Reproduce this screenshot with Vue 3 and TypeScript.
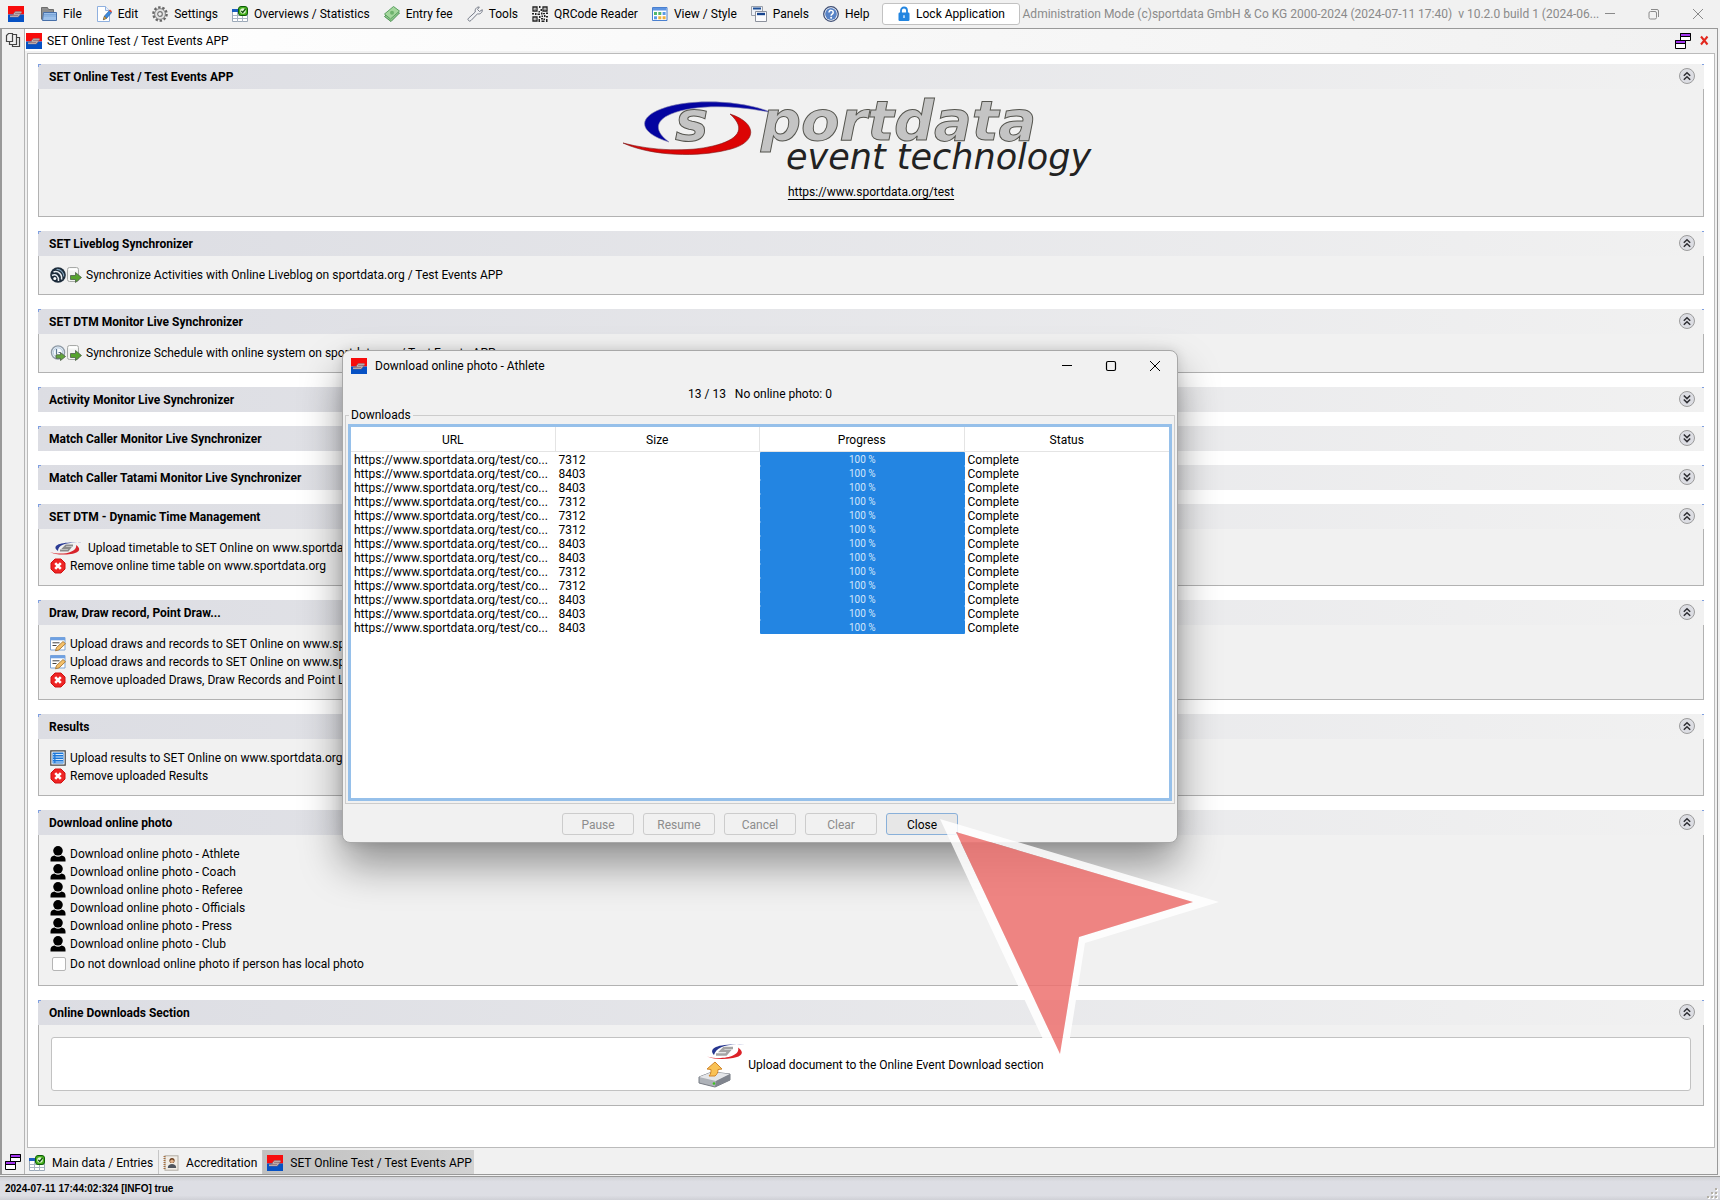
<script setup lang="ts">
import { ref } from 'vue'

interface MenuEntry { icon: string; label: string }
interface Row { icons: string[]; text: string }
interface Section { title: string; open: boolean; kind: 'logo' | 'rows' | 'upload'; rows: Row[]; option?: string }
interface Download { size: number; progress: number; status: string }

const icons: Record<string, string> = {
  app: '<rect width="16" height="8.5" fill="#f80c0c"/><rect y="8.5" width="16" height="7.500" fill="#0651c4"/><path d="M13.500 6.300H7.500L6 8.300H11.500L10 10.300H2" fill="none" stroke="#8f6f76" stroke-width="1.900"/><path d="M13.500 6.300H7.500L6 8.300H11.500L10 10.300H2" fill="none" stroke="#c4b8b8" stroke-width="1"/>',
  folder: '<path d="M.5 13.500V1.500h6l1 2h5v3" fill="#8e8e8e" stroke="#6d6d6d"/><path d="M2.500 6.500h13v8h-14z" fill="#9cc0ea" stroke="#476fa8"/><path d="M3 8.500h12M3 10h12" stroke="#7ba6da"/>',
  edit: '<path d="M1.500.5h8l4 4v11h-12z" fill="#fff" stroke="#8fb0df"/><path d="M9.500.5v4h4" fill="#e5edfa" stroke="#8fb0df"/><path d="M7.500 13.500l1-3.500 5-5.500 2.200 2-5 5.700z" fill="#3d8ce0" stroke="#2b5c9d" stroke-width=".7"/><path d="M13 4.500l1-1 2 1.800-1 1.200z" fill="#e6462c"/><path d="M7.300 13.800l1.100-3.500 2.200 2z" fill="#f0b64b" stroke="#6b4712" stroke-width=".5"/>',
  gear: '<circle cx="8" cy="8" r="6.600" fill="none" stroke="#666" stroke-width="2.400" stroke-dasharray="2.400 1.750"/><circle cx="8" cy="8" r="5.400" fill="#e2e2e2" stroke="#777" stroke-width=".9"/><circle cx="8" cy="8" r="2.300" fill="#f1f1f1" stroke="#777" stroke-width="1.200"/>',
  overview: '<path d="M.5 3.500h15v12H.5z" fill="#fff" stroke="#9ca9b8"/><path d="M0 3h8v3H0z" fill="#1c5fc0"/><path d="M1 9.500h14M1 12.500h14M5.500 6v10M10.500 6v10" stroke="#a9b4c3"/><rect x="6.500" y=".5" width="9" height="9" rx="2.500" fill="#47b11d" stroke="#0c5c08"/><circle cx="11" cy="5" r="2.800" fill="#dff5d2"/><path d="M9.300 4.800l1.400 1.700 2.800-3.500" fill="none" stroke="#0d4f0a" stroke-width="1.300"/>',
  money: '<path d="M.5 10.500l9-9 6 5.500-8.500 8.500z" fill="#8dc98a" stroke="#4c8f52"/><path d="M.5 8l9-7.500 6 4.500-9 8z" fill="#a4d79d" stroke="#5ba061"/><circle cx="8" cy="6.800" r="2" fill="#6eb36d"/>',
  wrench: '<path d="M1.500 14.500a1.600 1.600 0 0 1 0-2.300L8.300 6C7.500 3.500 9.500.8 12.300 1L10.500 3.500l2 2L15.300 3.700C15.700 6.500 13 8.600 10.500 7.800L4 14.500a1.700 1.700 0 0 1-2.500 0z" fill="#f0f1f4" stroke="#777c88"/>',
  qr: '<path d="M1 1h4v4H1zM11 1h4v4h-4zM1 11h4v4H1z" fill="#fff" stroke="#222" stroke-width="1.300"/><path d="M2.500 2.500h1.200v1.200H2.500zM12.400 2.500h1.200v1.200h-1.200zM2.500 12.400h1.200v1.200H2.500zM7 0h1.500v2H7zM8.500 3H10v2H8.500zM6.500 5H8v1.500H6.500zM0 7h2v1.500H0zM3 7h1.500v2H3zM5.500 7.500H8V9H5.500zM9 6.500h1.500v2H9zM11 7h2v1.300h-2zM14 6.500h2V8h-2zM7 10h1.500v2H7zM9.500 9.500H11V11H9.500zM12 9h1.500v2H12zM14 10h2v1.500h-2zM6.500 13H8v3H6.500zM9 12h2v1.500H9zM11.500 12.500h1.500V14h-1.500zM14 13h1.500v3H14zM9.500 14.500h3V16h-3z" fill="#222"/>',
  view: '<path d="M.5 1.500h14.500v13H.5z" fill="#fff" stroke="#4a80cf"/><path d="M1 2h13.500v2.500H1z" fill="#5d94e2"/><path d="M2 6h3v3H2zM6.300 6h3v3h-3z" fill="#52b86c"/><path d="M10.600 6h3v3h-3z" fill="#5a9ae6"/><path d="M2 10.300h3v3H2z" fill="#5a9ae6"/><path d="M6.300 10.300h3v3h-3zM10.600 10.300h3v3h-3z" fill="#eeb03c"/>',
  panels: '<path d="M.5.5h11v9H.5z" fill="#eef1f7" stroke="#9aa0ab"/><path d="M2 1.500h8v2H2z" fill="#1e5098"/><path d="M4.500 5.500h11v10h-11z" fill="#fbfbfd" stroke="#8c919c"/><path d="M6 6.800h8v2.400H6z" fill="#17458f"/>',
  help: '<circle cx="8" cy="8" r="7.300" fill="#fff" stroke="#3d4d74" stroke-width="1.300"/><circle cx="8" cy="8" r="5.900" fill="#5883c6"/><path d="M6 6.400c0-2.800 4.200-2.600 4.200 0 0 1.600-2.100 1.700-2.100 3.300" fill="none" stroke="#fff" stroke-width="1.500"/><circle cx="8.100" cy="11.700" r="1" fill="#fff"/>',
  lock: '<path d="M5 7V4.500a3 3 0 0 1 6 0V7" fill="none" stroke="#2285e0" stroke-width="1.800"/><rect x="2.500" y="6.500" width="11" height="8.500" rx="1.200" fill="#2285e0"/><path d="M8 9.300v2.800" stroke="#d8eafb" stroke-width="1.500"/>',
  pages: '<g fill="#f1f1f1" stroke="#444" stroke-width="1.200"><path d="M7.500 5.500h7v9h-7z"/><path d="M4.500 2.500h7v10h-7z"/><path d="M3.500 1.500h4v8h-6v-6z"/></g>',
  windows: '<g stroke="#000"><path d="M5.500.5h10v7h-10z" fill="#fff"/><path d="M5.500.5h10v3h-10z" fill="#a336f0"/><path d="M.5 7.500h10v8H.5z" fill="#fff"/><path d="M.5 7.500h10v3H.5z" fill="#a336f0"/></g>',
  redx: '<path d="M5 3.500l6.500 8M11.500 3.500l-6.500 8" stroke="#e2281e" stroke-width="2"/>',
  blog: '<circle cx="8" cy="8" r="7.800" fill="#1c2b3a"/><path d="M2 8.500c4-2 7 1 6.500 5.500M3.500 5C8 3.500 12.500 7 11.500 12.500" fill="none" stroke="#e9eef2" stroke-width="1.500"/><path d="M6.500 2.500c4-.5 7.500 3 7.200 7" fill="none" stroke="#7fa0b8" stroke-width="1.200"/><circle cx="4.800" cy="11.500" r="1.500" fill="#fff"/>',
  docgo: '<rect x="1.500" y=".5" width="11" height="14" rx="2" fill="#f2f4f2" stroke="#a8aaa8"/><path d="M3 2.500h8" stroke="#fff" stroke-width="2"/><path d="M4.500 8.500h5V5.500l6 5-6 5V12.500h-5z" fill="#55a32d" stroke="#4b5e48" stroke-width=".8"/>',
  clockgo: '<circle cx="8" cy="7.500" r="6.600" fill="#e3edf7" stroke="#8e9aa6" stroke-width="1.300"/><circle cx="8" cy="7.500" r="4.600" fill="#f7fbff" stroke="#a9bfd4" stroke-width=".8"/><path d="M6.500 4v5M8.500 7.500h2" stroke="#5d7690" stroke-width="1.200"/><path d="M6 9.800h4.500V7.500l5 4-5 4V13.300H6z" fill="#62a63c" stroke="#4c5c4a" stroke-width=".8"/>',
  remove: '<path d="M5 1h6l4 4v6l-4 4H5l-4-4V5z" fill="#ee2525" stroke="#d01212" stroke-linejoin="round"/><path d="M5.200 5.200l5.600 5.600M10.800 5.200l-5.600 5.600" stroke="#fff" stroke-width="2.600"/>',
  form: '<path d="M.5 1.500h14.500v12.500H.5z" fill="#fff" stroke="#7fa5d6"/><path d="M.5 1.500h14.500v2.800H.5z" fill="#6ea0e2"/><path d="M2.500 6.800h7M2.500 9.500h4" stroke="#444"/><path d="M5.500 14.800l1-3.300 6.500-6 2.500 2.200-6.500 6.200z" fill="#f5c069" stroke="#9a6b28" stroke-width=".8"/>',
  list: '<path d="M.8.8h14.400v14.400H.8z" fill="#fff" stroke="#444" stroke-width="1.200"/><path d="M2.500 2.500h11v11h-11z" fill="#1b76d8"/><path d="M5.500 4.500h7.500M5.500 7h7.500M5.500 9.500h7.500M5.500 12h7.500M3.200 4.500h1M3.200 7h1M3.200 9.500h1M3.200 12h1" stroke="#d7eafc"/>',
  person: '<circle cx="8" cy="4.800" r="4.800" fill="#000"/><path d="M.5 15.500v-2c0-2.500 1.500-3.500 4-4 2 1.700 5 1.700 7 0 2.500.5 4 1.500 4 4v2z" fill="#000"/>',
  badge: '<rect x="2" y=".8" width="13" height="14.400" fill="#f1ede6" stroke="#b1aca4"/><path d="M1.500 1v14" stroke="#a87040" stroke-width="2" stroke-dasharray="1 1"/><circle cx="9" cy="5.500" r="2.600" fill="#6a3c1c"/><circle cx="9" cy="6.300" r="1.800" fill="#e4b48c"/><path d="M4.800 13c0-3 2-4 4.200-4s4.200 1 4.200 4z" fill="#50555e"/>',
  up: '<circle cx="8" cy="8" r="7.500" fill="#dcdde3" stroke="#9c9c9c"/><path d="M4.800 7.800L8 4.700l3.200 3.100M4.800 11.800L8 8.700l3.200 3.100" fill="none" stroke="#2e2e33" stroke-width="1.500"/>',
  down: '<circle cx="8" cy="8" r="7.500" fill="#dcdde3" stroke="#9c9c9c"/><path d="M4.800 4.500L8 7.600l3.200-3.100M4.800 8.500L8 11.600l3.200-3.100" fill="none" stroke="#2e2e33" stroke-width="1.500"/>',
  minimize: '<path d="M3 7.500h10" stroke="currentColor"/>',
  restore: '<rect x="3" y="5.500" width="7.500" height="7.500" rx="1.500" fill="none" stroke="currentColor"/><path d="M5 3.500h6a1.500 1.500 0 0 1 1.500 1.500v6" fill="none" stroke="currentColor"/>',
  maximize: '<rect x="3.500" y="3.500" width="9" height="9" rx="1.500" fill="none" stroke="currentColor" stroke-width="1.200"/>',
  close: '<path d="M3 3l10 10M13 3L3 13" stroke="currentColor"/>',
}

const menu: MenuEntry[] = [
  { icon: 'folder', label: 'File' },
  { icon: 'edit', label: 'Edit' },
  { icon: 'gear', label: 'Settings' },
  { icon: 'overview', label: 'Overviews / Statistics' },
  { icon: 'money', label: 'Entry fee' },
  { icon: 'wrench', label: 'Tools' },
  { icon: 'qr', label: 'QRCode Reader' },
  { icon: 'view', label: 'View / Style' },
  { icon: 'panels', label: 'Panels' },
  { icon: 'help', label: 'Help' },
]

const roles = ['Athlete', 'Coach', 'Referee', 'Officials', 'Press', 'Club']

const sections = ref<Section[]>([
  { title: 'SET Online Test / Test Events APP', open: true, kind: 'logo', rows: [] },
  { title: 'SET Liveblog Synchronizer', open: true, kind: 'rows', rows: [
    { icons: ['blog', 'docgo'], text: 'Synchronize Activities with Online Liveblog on sportdata.org / Test Events APP' },
  ] },
  { title: 'SET DTM Monitor Live Synchronizer', open: true, kind: 'rows', rows: [
    { icons: ['clockgo', 'docgo'], text: 'Synchronize Schedule with online system on sportdata.org / Test Events APP' },
  ] },
  { title: 'Activity Monitor Live Synchronizer', open: false, kind: 'rows', rows: [] },
  { title: 'Match Caller Monitor Live Synchronizer', open: false, kind: 'rows', rows: [] },
  { title: 'Match Caller Tatami Monitor Live Synchronizer', open: false, kind: 'rows', rows: [] },
  { title: 'SET DTM - Dynamic Time Management', open: true, kind: 'rows', rows: [
    { icons: ['swoosh'], text: 'Upload timetable to SET Online on www.sportdata.org' },
    { icons: ['remove'], text: 'Remove online time table on www.sportdata.org' },
  ] },
  { title: 'Draw, Draw record, Point Draw...', open: true, kind: 'rows', rows: [
    { icons: ['form'], text: 'Upload draws and records to SET Online on www.sportdata.org' },
    { icons: ['form'], text: 'Upload draws and records to SET Online on www.sportdata.org' },
    { icons: ['remove'], text: 'Remove uploaded Draws, Draw Records and Point Lists' },
  ] },
  { title: 'Results', open: true, kind: 'rows', rows: [
    { icons: ['list'], text: 'Upload results to SET Online on www.sportdata.org / Test Events APP' },
    { icons: ['remove'], text: 'Remove uploaded Results' },
  ] },
  { title: 'Download online photo', open: true, kind: 'rows',
    rows: roles.map((r) => ({ icons: ['person'], text: `Download online photo - ${r}` })),
    option: 'Do not download online photo if person has local photo' },
  { title: 'Online Downloads Section', open: true, kind: 'upload', rows: [] },
])

const columns = ['URL', 'Size', 'Progress', 'Status']
const downloads: Download[] = [7312, 8403, 8403, 7312, 7312, 7312, 8403, 8403, 7312, 7312, 8403, 8403, 8403]
  .map((size) => ({ size, progress: 100, status: 'Complete' }))

const actions = [
  { label: 'Pause', enabled: false },
  { label: 'Resume', enabled: false },
  { label: 'Cancel', enabled: false },
  { label: 'Clear', enabled: false },
  { label: 'Close', enabled: true },
]
const skipLocal = ref(false)
</script>

<template>
  <div class="window">
    <header class="menubar">
      <svg class="icon" viewBox="0 0 16 16" v-html="icons.app" />
      <nav class="menu">
        <button v-for="m in menu" :key="m.label" type="button" class="menu-item">
          <svg class="icon" viewBox="0 0 16 16" v-html="icons[m.icon]" />{{ m.label }}
        </button>
      </nav>
      <button type="button" class="lock">
        <svg class="icon" viewBox="0 0 16 16" v-html="icons.lock" />Lock Application
      </button>
      <span class="mode">Administration Mode (c)sportdata GmbH &amp; Co KG 2000-2024 (2024-07-11 17:40)&nbsp; v 10.2.0 build 1 (2024-06...</span>
      <div class="win-controls muted">
        <button v-for="c in ['minimize', 'restore', 'close']" :key="c" type="button" :aria-label="c">
          <svg class="icon" viewBox="0 0 16 16" v-html="icons[c]" />
        </button>
      </div>
    </header>

    <div class="workspace">
      <aside class="rail">
        <svg class="icon" viewBox="0 0 16 16" v-html="icons.pages" />
        <svg class="icon" viewBox="0 0 16 16" v-html="icons.windows" />
      </aside>
      <div class="frame">
        <div class="frame-title">
          <svg class="icon" viewBox="0 0 16 16" v-html="icons.app" />
          <span class="grow">SET Online Test / Test Events APP</span>
          <button type="button" aria-label="Float"><svg class="icon" viewBox="0 0 16 16" v-html="icons.windows" /></button>
          <button type="button" aria-label="Close"><svg class="icon" viewBox="0 0 16 16" v-html="icons.redx" /></button>
        </div>

        <main class="content">
          <section v-for="s in sections" :key="s.title" class="section">
            <div class="section-head">
              <h2>{{ s.title }}</h2>
              <button type="button" :aria-label="s.open ? 'Collapse' : 'Expand'" @click="s.open = !s.open">
                <svg class="icon" viewBox="0 0 16 16" v-html="s.open ? icons.up : icons.down" />
              </button>
            </div>

            <div v-if="s.open && s.kind === 'logo'" class="section-body brand">
              <svg class="brand-logo" viewBox="0 0 496 78" role="img" aria-label="sportdata event technology">
                <path d="M46 41C16 32 14 17 38 8c28-11 82-9 112 4C114 4 72 3 48 13c-17 7-16 18-2 28z" fill="#0404a0" stroke="#8a8ab0" stroke-width=".6" />
                <path d="M0 42c30 8 66 9 90 3 25-6 34-17 17-32 28 9 27 28 1 35-33 9-80 7-108-6z" fill="#dc0404" stroke="#7c1818" stroke-width=".6" />
                <text class="mark" x="52" y="39">s</text>
                <text class="mark" x="138" y="39">portdata</text>
                <text class="tagline" x="163" y="68">event technology</text>
              </svg>
              <a href="https://www.sportdata.org/test">https://www.sportdata.org/test</a>
            </div>

            <div v-else-if="s.open && s.kind === 'rows'" class="section-body list">
              <button v-for="(r, i) in s.rows" :key="i" type="button" class="row">
                <span class="row-icons">
                  <template v-for="n in r.icons" :key="n">
                    <svg v-if="n === 'swoosh'" class="swoosh" viewBox="0 0 34 14">
                      <path d="M8 10C0 4 12 0 33 2 18 1 8 3 8 10z" fill="#2c3c94" />
                      <path d="M0 11c12 4 28 0 26-7 6 4 3 8-5 9-8 1-15 1-21-2z" fill="#d8242b" />
                      <path d="M23 4.500h-7L13.500 7H20L18 9.500H10" fill="none" stroke="#8b8b8b" stroke-width="1.800" />
                    </svg>
                    <svg v-else class="icon" viewBox="0 0 16 16" v-html="icons[n]" />
                  </template>
                </span>{{ r.text }}
              </button>
              <label v-if="s.option" class="option">
                <input v-model="skipLocal" type="checkbox">{{ s.option }}
              </label>
            </div>

            <div v-else-if="s.open" class="section-body upload">
              <button type="button">
                <svg class="upload-icon" viewBox="0 0 48 46">
                  <path d="M16 13C10 7 18 1 47 3 30 1 18 5 16 13z" fill="#26368f" />
                  <path d="M9 14.500c14 4 34 0 31-9 7 5 4 9-5 10.500-9 1.500-18 1.500-26-1.500z" fill="#dc2228" />
                  <path d="M35 6h-9l-3 3h8l-3 3.500H18" fill="none" stroke="#a4a4a4" stroke-width="2.500" />
                  <path d="M1 35l13-5 18 2v6L17 45 1 41z" fill="#aeb2b8" stroke="#777c84" />
                  <path d="M1 35l13-5 18 2-14 7z" fill="#e4e6e9" />
                  <path d="M18 39l14-7v6l-15 7z" fill="#80858e" />
                  <circle cx="16" cy="41.500" r="1.300" fill="#3ac21f" />
                  <path d="M17 20l7 7-4 .5c0 3-1 5-3 6.500h-6c2-2 2-4 2-6.500l-4-.5z" fill="#f9c255" stroke="#d0852a" />
                </svg>
                Upload document to the Online Event Download section
              </button>
            </div>
          </section>
        </main>

        <nav class="tabs">
          <button type="button"><svg class="icon" viewBox="0 0 16 16" v-html="icons.overview" />Main data / Entries</button>
          <button type="button"><svg class="icon" viewBox="0 0 16 16" v-html="icons.badge" />Accreditation</button>
          <button type="button" class="active"><svg class="icon" viewBox="0 0 16 16" v-html="icons.app" />SET Online Test / Test Events APP</button>
        </nav>
      </div>
    </div>

    <footer class="status">
      <span>2024-07-11 17:44:02:324 [INFO] true</span>
      <svg class="grip" viewBox="0 0 12 12"><path d="M8 0h2v2H8zM4 4h2v2H4zM8 4h2v2H8zM0 8h2v2H0zM4 8h2v2H4zM8 8h2v2H8z" fill="#fff" transform="translate(1 1)" /><path d="M8 0h2v2H8zM4 4h2v2H4zM8 4h2v2H8zM0 8h2v2H0zM4 8h2v2H4zM8 8h2v2H8z" fill="#b3b0a6" /></svg>
    </footer>

    <div class="dialog" role="dialog" aria-labelledby="dialog-title">
      <div class="dialog-title">
        <svg class="icon" viewBox="0 0 16 16" v-html="icons.app" />
        <span id="dialog-title" class="grow">Download online photo - Athlete</span>
        <div class="win-controls">
          <button v-for="c in ['minimize', 'maximize', 'close']" :key="c" type="button" :aria-label="c">
            <svg class="icon" viewBox="0 0 16 16" v-html="icons[c]" />
          </button>
        </div>
      </div>
      <p class="count">13 / 13&nbsp;&nbsp; No online photo: 0</p>
      <fieldset>
        <legend>Downloads</legend>
        <div class="table-box">
          <table>
            <thead>
              <tr><th v-for="c in columns" :key="c" scope="col">{{ c }}</th></tr>
            </thead>
            <tbody>
              <tr v-for="(d, i) in downloads" :key="i">
                <td>https://www.sportdata.org/test/co...</td>
                <td>{{ d.size }}</td>
                <td class="progress"><div :style="{ width: d.progress + '%' }">{{ d.progress }} %</div></td>
                <td>{{ d.status }}</td>
              </tr>
            </tbody>
          </table>
        </div>
      </fieldset>
      <div class="actions">
        <button v-for="a in actions" :key="a.label" type="button" :disabled="!a.enabled">{{ a.label }}</button>
      </div>
      <svg class="pointer" viewBox="0 0 280 264" aria-hidden="true">
        <path fill-rule="evenodd" d="M0 0L279 83 145 124 123 263ZM16 13L120 235 139 118 253 83Z" fill="#fff" fill-opacity=".85" />
        <path d="M16 13L120 235 139 118 253 83Z" fill="#ed7270" fill-opacity=".86" />
      </svg>
    </div>
  </div>
</template>

<style>
body { margin: 0; }
</style>

<style scoped>
* { box-sizing: border-box; }
.window {
  position: relative;
  display: flex;
  flex-direction: column;
  min-height: 100vh;
  overflow: hidden;
  background: #f1f1f1;
  color: #000;
  font: 12px/18px Roboto, "Open Sans", sans-serif;
}
button { padding: 0; border: 0; background: none; font: inherit; color: inherit; white-space: nowrap; }
.icon { display: block; flex: none; width: 16px; height: 16px; }
.grow { flex: 1; }

.menubar { display: flex; align-items: center; height: 28px; padding-left: 8px; }
.menu { display: flex; gap: 14px; margin-left: 17px; }
.menu-item { display: flex; align-items: center; gap: 6px; }
.lock {
  display: flex; align-items: center; justify-content: center; gap: 4px;
  width: 138px; height: 22px; margin-left: 12px;
  border: 1px solid #c2c2c2; border-radius: 3px; background: #fff;
}
.mode { flex: 1; min-width: 0; margin-left: 3px; color: #8a8a8a; white-space: nowrap; }
.win-controls { display: flex; gap: 28px; }
.muted { padding-right: 14px; color: #8a8a8a; }

.workspace {
  display: flex; flex: 1; margin-right: 2px;
  border: solid #999; border-width: 1px 1px 1px 2px;
}
.rail {
  display: flex; flex-direction: column; justify-content: space-between;
  width: 23px; padding: 3px 0 4px 3px; border-right: 1px solid #b5b5b5;
}
.frame { display: flex; flex: 1; flex-direction: column; min-width: 0; padding-right: 2px; }
.frame-title {
  display: flex; align-items: center; gap: 5px; height: 22px; padding: 1px 3px 0 1px;
  background: linear-gradient(90deg, #fff, #f1f1f1);
}
.content {
  display: flex; flex: 1; flex-direction: column; gap: 14px;
  margin: 2px 0 0 2px; padding: 10px; border: 1px solid #bbb; background: #fff;
}
.section-head {
  display: flex; align-items: center; justify-content: space-between; height: 25px; padding: 0 9px 0 11px;
  background:
    linear-gradient(#7f9fe0, #7f9fe0) 0 0 / 3px 1px no-repeat,
    linear-gradient(#7f9fe0, #7f9fe0) 0 0 / 1px 3px no-repeat,
    linear-gradient(#7f9fe0, #7f9fe0) 100% 0 / 2px 1px no-repeat,
    linear-gradient(90deg, #dcdde3, #f1f1f1);
}
.section-head button { padding-bottom: 1px; }
h2 { margin: 0; padding-top: 1px; font-size: 12px; line-height: 18px; font-weight: 700; }
.section-body { border: 1px solid #b2b2b2; border-top: 0; background: #f1f1f1; }
.brand { display: flex; flex-direction: column; align-items: center; gap: 4px; padding: 12px 0 15px; }
.brand-logo { width: 496px; height: 78px; overflow: visible; }
.brand a { color: #000; text-underline-offset: 3px; }
.mark { fill: #c4c4c4; stroke: #55554f; stroke-width: 1px; font: italic 700 56px "DejaVu Sans", sans-serif; }
.tagline { fill: #222; font: italic 35px "DejaVu Sans", sans-serif; }
.list { display: flex; flex-direction: column; align-items: flex-start; padding: 10px 11px; }
.row { display: flex; align-items: center; gap: 4px; height: 18px; }
.row-icons { display: flex; }
.swoosh { width: 34px; height: 14px; }
.option { display: flex; align-items: center; gap: 4px; height: 22px; padding-left: 2px; }
.option input { appearance: none; width: 14px; height: 14px; margin: 0; border: 1px solid #b5b5b5; border-radius: 2px; background: #fff; }
.upload { padding: 12px 12px 14px; }
.upload button {
  display: flex; align-items: center; justify-content: center; gap: 2px; width: 100%; height: 54px; padding-top: 2px;
  border: 1px solid #c2c2c2; border-radius: 3px; background: #fff;
}
.upload-icon { width: 48px; height: 46px; }

.tabs { display: flex; height: 26px; padding: 2px 0 0; }
.tabs button { display: flex; align-items: center; gap: 7px; padding: 1px 5px 0 4px; border-right: 1px solid #c6c6c6; }
.tabs .active { padding-right: 2px; border: 0; background: linear-gradient(90deg, #c0c0c0, #d2d2d2); }

.status {
  display: flex; align-items: flex-end; justify-content: space-between; height: 24px; margin-top: 1px; padding: 0 1px 0 5px;
  border-top: 1px solid #999; background: linear-gradient(#cfd0d4, #dddee4 20%, #dddee4 80%, #cfd0d6);
  font: 700 10px/22px "Liberation Sans", sans-serif;
}
.grip { width: 12px; height: 12px; }

.dialog {
  position: absolute; top: 350px; left: calc(50% - 518px); width: 836px;
  padding: 0 2px 7px; border: 1px solid #a8a8a8; border-radius: 8px; background: #f1f1f1;
  box-shadow: 0 22px 42px rgba(0, 0, 0, .4), 0 0 12px rgba(0, 0, 0, .12);
}
.dialog-title { display: flex; align-items: center; gap: 8px; height: 30px; padding: 0 12px 0 6px; }
.count { margin: 4px 0 3px; text-align: center; }
fieldset { min-width: 0; margin: 0; padding: 0 2px 2px; border: 1px solid #ccc; }
legend { margin-left: 1px; padding: 0 2px; }
.table-box { height: 377px; border: 3px solid #96c0ea; background: #fff; }
table { width: 100%; border-collapse: separate; border-spacing: 0; table-layout: fixed; }
th { height: 25px; padding: 2px 0 0; border-right: 1px solid #e4e4e4; border-bottom: 1px solid #e4e4e4; font-weight: 400; }
th:last-child { border-right: 0; }
td { height: 14px; padding: 2px 3px 0; line-height: 12px; white-space: nowrap; overflow: hidden; }
.progress { padding: 0; }
.progress div { height: 14px; padding-top: 2px; border-radius: 1px; background: #2385e2; color: #d3e6fa; font-size: 10px; line-height: 12px; text-align: center; }
.actions { display: flex; justify-content: center; gap: 9px; margin-top: 9px; }
.actions button { width: 72px; height: 22px; padding-top: 2px; border: 1px solid #89b0d9; border-radius: 3px; background: #e7e7e7; line-height: 18px; }
.actions button:disabled { border-color: #ccc; background: #f1f1f1; color: #8c8c8c; }
.pointer { position: absolute; top: 468px; left: 597px; width: 280px; height: 264px; pointer-events: none; }
</style>
